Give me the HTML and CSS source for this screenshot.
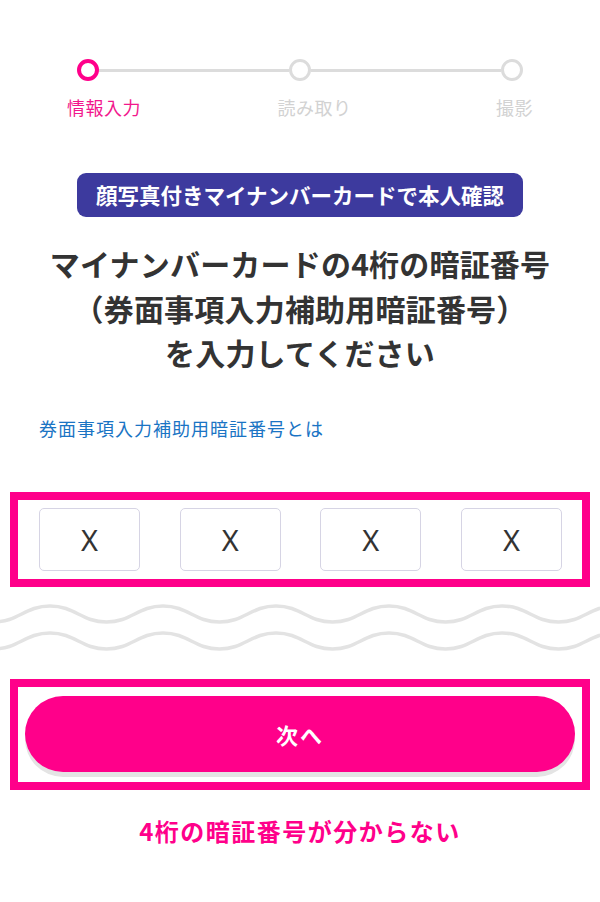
FILE: index.html
```html
<!DOCTYPE html>
<html lang="ja">
<head>
<meta charset="utf-8">
<title>暗証番号入力</title>
<link rel="stylesheet" href="styles.css">
</head>
<body>
<div class="page">
  <div class="track">
    <span class="dot dot-active"></span>
    <span class="bar"></span>
    <span class="dot"></span>
    <span class="bar"></span>
    <span class="dot"></span>
  </div>
  <div class="steps">
    <span class="step step-active">情報入力</span>
    <span class="step">読み取り</span>
    <span class="step">撮影</span>
  </div>

  <div class="badge">顔写真付きマイナンバーカードで本人確認</div>

  <h1 class="title">マイナンバーカードの4桁の暗証番号<br>（券面事項入力補助用暗証番号）<br>を入力してください</h1>

  <p class="help-link">券面事項入力補助用暗証番号とは</p>

  <div class="pin-frame">
    <div class="pin-box">X</div>
    <div class="pin-box">X</div>
    <div class="pin-box">X</div>
    <div class="pin-box">X</div>
  </div>

  <svg class="waves" width="600" height="54" viewBox="0 0 600 54">
    <path d="M-6.5,23 c25,0 31.5,-16 56.5,-16 s31.5,16 56.5,16 s31.5,-16 56.5,-16 s31.5,16 56.5,16 s31.5,-16 56.5,-16 s31.5,16 56.5,16 s31.5,-16 56.5,-16 s31.5,16 56.5,16 s31.5,-16 56.5,-16 s31.5,16 56.5,16 s31.5,-16 56.5,-16 s31.5,16 56.5,16" />
    <path d="M-6.5,50 c25,0 31.5,-16 56.5,-16 s31.5,16 56.5,16 s31.5,-16 56.5,-16 s31.5,16 56.5,16 s31.5,-16 56.5,-16 s31.5,16 56.5,16 s31.5,-16 56.5,-16 s31.5,16 56.5,16 s31.5,-16 56.5,-16 s31.5,16 56.5,16 s31.5,-16 56.5,-16 s31.5,16 56.5,16" />
  </svg>

  <div class="button-frame">
    <div class="next-button">次へ</div>
  </div>

  <p class="forgot">4桁の暗証番号が分からない</p>
</div>
</body>
</html>
```

FILE: styles.css
```css
html, body {
  margin: 0;
  padding: 0;
  background: #ffffff;
}

body {
  font-family: "Noto Sans CJK JP", "Noto Sans", sans-serif;
  color: #333333;
}

.page {
  width: 600px;
  padding-bottom: 40px;
}

.track {
  display: flex;
  align-items: center;
  margin: 59px 77px 0;
}

.dot {
  width: 22px;
  height: 22px;
  box-sizing: border-box;
  border: 3px solid #dcdcdc;
  border-radius: 50%;
  background: #ffffff;
  flex: none;
}

.dot-active {
  border: 4.5px solid #ff008a;
}

.bar {
  flex: 1;
  height: 3px;
  background: #dcdcdc;
}

.steps {
  display: flex;
  justify-content: space-between;
  padding: 0 67px;
  margin-top: 13px;
}

.step {
  font-size: 18px;
  line-height: 26px;
  letter-spacing: 0.5px;
  color: #d2d2d2;
}

.step-active {
  color: #f2178d;
}

.step:nth-child(2) {
  margin-right: 8px;
}

.badge {
  width: fit-content;
  margin: 53px auto 0;
  height: 44px;
  box-sizing: border-box;
  padding: 0 19px;
  line-height: 44px;
  background: #3d3a9e;
  border-radius: 9px;
  color: #ffffff;
  font-size: 21.5px;
  font-weight: 700;
}

.title {
  margin: 24px 0 0;
  text-align: center;
  font-size: 30px;
  line-height: 44.5px;
  letter-spacing: 0.2px;
  font-weight: 700;
  color: #333333;
}

.help-link {
  margin: 40px 0 0;
  padding-left: 39px;
  font-size: 18px;
  line-height: 26px;
  letter-spacing: 1px;
  color: #1a74c4;
}

.pin-frame {
  margin: 51px 10px 0;
  border: 8px solid #ff008a;
  padding: 8px 20px 8px 21px;
  display: flex;
  justify-content: space-between;
}

.pin-box {
  width: 101px;
  height: 63px;
  box-sizing: border-box;
  border: 1.5px solid #d6d4e4;
  border-radius: 5px;
  display: flex;
  align-items: center;
  justify-content: center;
  font-family: "Noto Sans", sans-serif;
  font-size: 29px;
  font-weight: 400;
  color: #333333;
}

.waves {
  display: block;
  margin-top: 12px;
}

.waves path {
  fill: none;
  stroke: #e3e3e3;
  stroke-width: 3.5;
}

.button-frame {
  margin: 26px 10px 0;
  border: 8px solid #ff008a;
  padding: 9px 7px 10px;
}

.next-button {
  height: 76px;
  border-radius: 38px;
  background: #ff008a;
  box-shadow: 0 5px 0 #e4e4e4;
  color: #ffffff;
  text-align: center;
  line-height: 76px;
  font-size: 22px;
  font-weight: 700;
  letter-spacing: 2px;
}

.forgot {
  margin: 24px 0 0;
  text-align: center;
  font-size: 24px;
  line-height: 34px;
  letter-spacing: 1.5px;
  font-weight: 700;
  color: #ff008a;
}
```
